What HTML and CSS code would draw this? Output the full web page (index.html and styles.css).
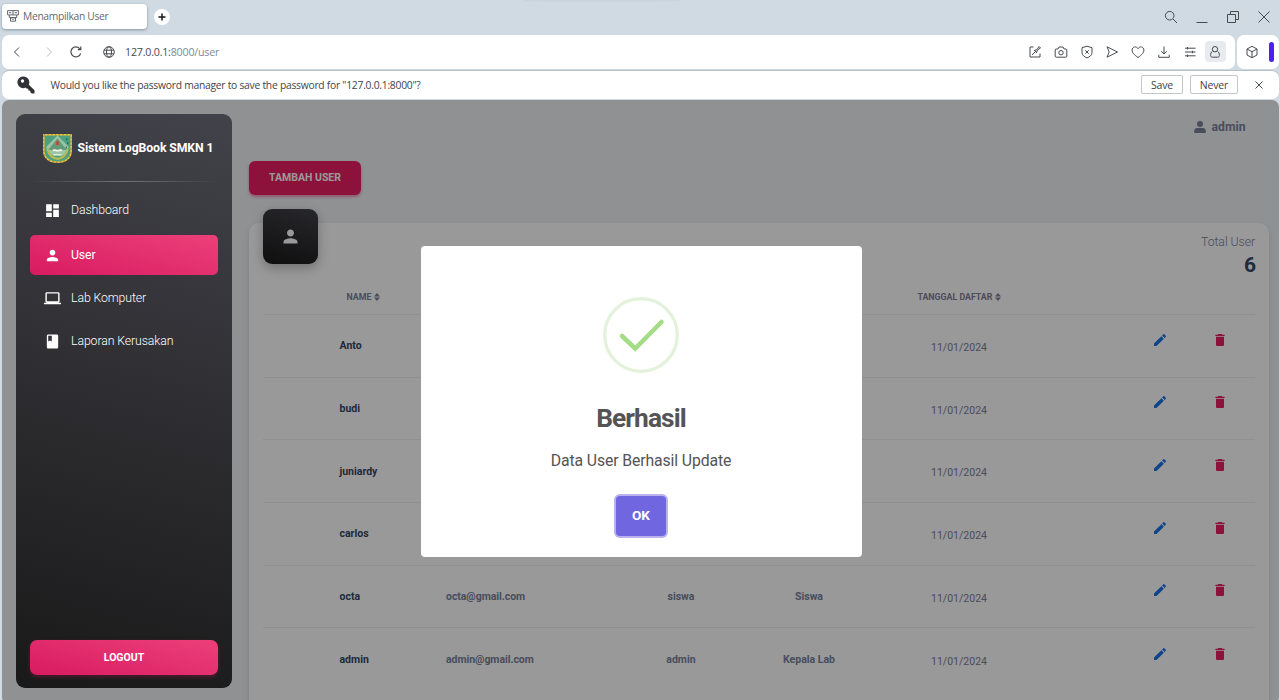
FILE: index.html
```
<!DOCTYPE html>
<html lang="id">
<head>
<meta charset="utf-8">
<title>Menampilkan User</title>
<link rel="stylesheet" href="styles.css">
</head>
<body>
<svg class="defs" width="0" height="0" aria-hidden="true">
  <symbol id="person" viewBox="0 0 24 24"><path d="M12 12c2.210 0 4-1.790 4-4s-1.790-4-4-4-4 1.790-4 4 1.790 4 4 4zm0 2c-2.670 0-8 1.340-8 4v2h16v-2c0-2.660-5.330-4-8-4z"/></symbol>
  <symbol id="edit" viewBox="0 0 24 24"><path d="M3 17.250V21h3.750L17.810 9.940l-3.750-3.750L3 17.250zM20.710 7.040c.390-.390.390-1.020 0-1.410l-2.340-2.340c-.390-.390-1.020-.390-1.410 0l-1.830 1.830 3.750 3.750 1.830-1.830z"/></symbol>
  <symbol id="trash" viewBox="0 0 24 24"><path d="M6 19c0 1.100.900 2 2 2h8c1.100 0 2-.900 2-2V7H6v12zM19 4h-3.500l-1-1h-5l-1 1H5v2h14V4z"/></symbol>
  <symbol id="sort" viewBox="0 0 6 8"><path d="M0 3.400L3 0l3 3.400zM0 4.600h6L3 8z"/></symbol>
</svg>

<header class="tabs">
  <div class="tab">
    <svg class="tab-icon" viewBox="0 0 12 12"><path d="M.6.600h10.800v4.300H.6zM6 .6v4.300M2 2.700h2.400M7.600 2.700H10M2.300 5v2.500h7.400V5M3.500 7.500v3.700h5V7.500M4.300 8l1.700 1.600L7.700 8"/></svg>
    <span>Menampilkan User</span>
  </div>
  <div class="new-tab"><svg viewBox="0 0 16 16"><path d="M8 4.500v7M4.500 8h7"/></svg></div>
  <div class="top-shade"></div>
  <div class="window-tools">
    <svg viewBox="0 0 14 14"><circle cx="5.700" cy="5.700" r="4.300"/><path d="M9 9l4 4"/></svg>
    <svg viewBox="0 0 14 14"><path d="M1.500 12.500h11"/></svg>
    <svg viewBox="0 0 14 14"><path d="M1.500 4.500h8v8h-8zM4.500 4.500v-3h8v8h-3"/></svg>
    <svg viewBox="0 0 14 14"><path d="M1.500 1.500l11 11M12.500 1.500l-11 11"/></svg>
  </div>
</header>

<div class="toolbar">
  <div class="address">
    <svg class="nav back" viewBox="0 0 14 14"><path d="M9 2.500L4.500 7 9 11.500"/></svg>
    <svg class="nav forward" viewBox="0 0 14 14"><path d="M5 2.500L9.500 7 5 11.500"/></svg>
    <svg class="nav reload" viewBox="0 0 14 14"><path d="M11.700 8.300A5 5 0 1 1 11 4M11.800 1.600v3H8.800"/></svg>
    <svg class="nav globe" viewBox="0 0 14 14"><circle cx="7" cy="7" r="5.300"/><ellipse cx="7" cy="7" rx="2.500" ry="5.300"/><path d="M2.200 5.200h9.600M2.200 8.800h9.600"/></svg>
    <span class="url">127.0.0.1:<span class="url-path">8000/user</span></span>
    <div class="actions">
      <svg viewBox="0 0 14 14"><path d="M5.500 2H2v10h10V8.500M4 10l3-3M6 5l3 3M6.500 5.500L9 4.500l2-3 1.500 1.500-3 2-1 2.500"/></svg>
      <svg viewBox="0 0 14 14"><path d="M2.200 4h1.800L5 2h4l1 2h1.800q1 0 1 1v6.200q0 1-1 1H2.200q-1 0-1-1V5q0-1 1-1z"/><circle cx="7" cy="7.700" r="2.200"/></svg>
      <svg viewBox="0 0 14 14"><path d="M7 1.200l5 1.500v5c0 2.600-2.500 4.200-5 5.200-2.500-1-5-2.600-5-5.200v-5zM5.300 5.300l3.400 3.400M8.700 5.300L5.300 8.700"/></svg>
      <svg viewBox="0 0 14 14"><path d="M2 1.800L12.500 7 2 12.200 4.200 7z"/></svg>
      <svg viewBox="0 0 14 14"><path d="M7 12.500C3 9.700 1.100 7.600 1.100 5.200 1.100 1.400 5.600.900 7 3.700c1.400-2.800 5.900-2.300 5.900 1.500C12.900 7.600 11 9.700 7 12.500z"/></svg>
      <svg viewBox="0 0 14 14"><path d="M7 1.500v7.300M4.200 6.200L7 9l2.800-2.800M1.800 9.800v2.500h10.400V9.800"/></svg>
      <svg viewBox="0 0 14 14"><path d="M2 3.200h10.500M2 7h10.500M2 10.800h10.500M4.500 2v2.400M9.500 5.800v2.400M4.500 9.600V12"/></svg>
      <div class="profile"><svg viewBox="0 0 14 14"><circle cx="7" cy="4.200" r="2.700"/><path d="M4.500 6.200C2.800 7.200 2.600 9 2.600 10.500c0 1 .6 1.700 1.700 1.700h5.400c1.100 0 1.700-.7 1.700-1.700 0-1.500-.2-3.300-1.900-4.300"/></svg></div>
    </div>
  </div>
  <div class="extension">
    <svg viewBox="0 0 14 14"><path d="M7 1.300l5 2.700v6L7 12.700 2 10V4zM2 4l5 2.700L12 4M7 6.700v6"/></svg>
    <div class="side-handle"></div>
  </div>
</div>

<div class="password-bar">
  <svg class="key" viewBox="0 0 18 18"><path fill-rule="evenodd" d="M6.300.500a5.800 5.800 0 1 0 2.300 11.100l.9.900 1.700.2.300 1.700 1.700.3.300 1.800 1.300 1h2.700v-3.200l-5.700-5.600A5.800 5.800 0 0 0 6.300.500zM5.500 3.300a1.700 1.700 0 1 1 0 3.400 1.700 1.700 0 0 1 0-3.400z"/></svg>
  <span class="question">Would you like the password manager to save the password for "127.0.0.1:8000"?</span>
  <button class="bar-button save">Save</button>
  <button class="bar-button never">Never</button>
  <svg class="dismiss" viewBox="0 0 10 10"><path d="M1.500 1.500l7 7M8.500 1.500l-7 7"/></svg>
</div>

<div class="page">
  <aside class="sidebar">
    <div class="brand">
      <svg class="crest" viewBox="0 0 28 28">
        <path d="M.8.800h26.400v15.700c0 6.500-5.200 10.700-13.200 10.700S.8 23 .8 16.500z" fill="#4d9f7d"/>
        <path d="M14 1.500l11 11-5 8H8l-5-8z" fill="#9cc5a6"/>
        <path d="M14 4l9 11.500H5z" fill="#649a78"/>
        <path d="M4 14q2 9 10 10 8-1 10-10" fill="none" stroke="#b6bb52" stroke-width="2"/>
        <path d="M9.500 15q2.500-.8 4.500.5 2-1.300 4.500-.5v1.600q-2.500-.8-4.500.5-2-1.300-4.500-.5zM10 19.500h8v1.300h-8z" fill="#f4f5ec"/>
        <path d="M12.800 8L14 6l1.200 2v2.500h-2.400z" fill="#cf3f35"/>
        <path d="M23 4v2M24 8v2M22.500 12v2" stroke="#254d49" stroke-width="1"/>
        <path d="M.8.800h26.400v15.700c0 6.500-5.200 10.700-13.200 10.700S.8 23 .8 16.500z" fill="none" stroke="#e0ce43" stroke-width="1.500"/>
        <path d="M.8.800h26.400v15.700c0 6.500-5.200 10.700-13.200 10.700S.8 23 .8 16.500z" fill="none" stroke="#bd5c3e" stroke-width="1" stroke-dasharray="1.200 2.400"/>
      </svg>
      <span>Sistem LogBook SMKN 1</span>
    </div>
    <div class="divider"></div>
    <nav class="menu">
      <a class="item"><svg viewBox="0 0 24 24"><path d="M3 13h8V3H3v10zm0 8h8v-6H3v6zm10 0h8V11h-8v10zm0-18v6h8V3h-8z"/></svg><span>Dashboard</span></a>
      <a class="item active"><svg><use href="#person"/></svg><span>User</span></a>
      <a class="item"><svg viewBox="0 0 24 24"><path d="M20 18c1.100 0 1.990-.900 1.990-2L22 5c0-1.100-.900-2-2-2H4c-1.100 0-2 .900-2 2v11c0 1.100.900 2 2 2H0v2h24v-2h-4zM4 5h16v11H4V5z"/></svg><span>Lab Komputer</span></a>
      <a class="item"><svg viewBox="0 0 24 24"><path fill-rule="evenodd" d="M18 2H6c-1.100 0-2 .900-2 2v16c0 1.100.900 2 2 2h12c1.100 0 2-.900 2-2V4c0-1.100-.900-2-2-2zM6 4h5v8l-2.500-1.500L6 12V4z"/></svg><span>Laporan Kerusakan</span></a>
    </nav>
    <button class="logout">LOGOUT</button>
  </aside>

  <main class="content">
    <div class="account"><svg viewBox="0 0 12 12"><circle cx="6" cy="3" r="3"/><path d="M.2 12V10A3.100 3.100 0 0 1 3.200 7h5.600a3.100 3.100 0 0 1 3 3v2z"/></svg><span>admin</span></div>
    <button class="add">TAMBAH USER</button>
    <section class="card">
      <div class="card-icon"><svg><use href="#person"/></svg></div>
      <div class="card-head">
        <div class="total-label">Total User</div>
        <div class="total">6</div>
      </div>
      <div class="table">
        <div class="row head"><span class="name">NAME <svg><use href="#sort"/></svg></span><span class="date">TANGGAL DAFTAR <svg><use href="#sort"/></svg></span></div>
        <div class="row"><span class="name">Anto</span><span class="date">11/01/2024</span><svg class="edit"><use href="#edit"/></svg><svg class="trash"><use href="#trash"/></svg></div>
        <div class="row"><span class="name">budi</span><span class="date">11/01/2024</span><svg class="edit"><use href="#edit"/></svg><svg class="trash"><use href="#trash"/></svg></div>
        <div class="row"><span class="name">juniardy</span><span class="date">11/01/2024</span><svg class="edit"><use href="#edit"/></svg><svg class="trash"><use href="#trash"/></svg></div>
        <div class="row"><span class="name">carlos</span><span class="date">11/01/2024</span><svg class="edit"><use href="#edit"/></svg><svg class="trash"><use href="#trash"/></svg></div>
        <div class="row"><span class="name">octa</span><span class="email">octa@gmail.com</span><span class="role">siswa</span><span class="position">Siswa</span><span class="date">11/01/2024</span><svg class="edit"><use href="#edit"/></svg><svg class="trash"><use href="#trash"/></svg></div>
        <div class="row"><span class="name">admin</span><span class="email">admin@gmail.com</span><span class="role">admin</span><span class="position">Kepala Lab</span><span class="date">11/01/2024</span><svg class="edit"><use href="#edit"/></svg><svg class="trash"><use href="#trash"/></svg></div>
      </div>
    </section>
  </main>

  <div class="overlay">
    <div class="dialog">
      <svg class="success" viewBox="0 0 76 76"><circle cx="38" cy="38" r="36.300"/><path d="M19 39L32.200 51.500 58.500 25"/></svg>
      <h2>Berhasil</h2>
      <p>Data User Berhasil Update</p>
      <button class="ok">OK</button>
    </div>
  </div>
</div>
</body>
</html>
```

FILE: styles.css
```
* { box-sizing: border-box; }
body {
  margin: 0;
  width: 1280px;
  height: 700px;
  overflow: hidden;
  display: flex;
  flex-direction: column;
  background: #d0dae2;
  font-family: Roboto, "Liberation Sans", sans-serif;
}
button { border: 0; padding: 0; font-family: inherit; }
.defs { position: absolute; }

/* Browser chrome */
.tabs, .toolbar, .password-bar { font-family: "Open Sans", "Noto Sans", sans-serif; }
.tabs svg, .toolbar svg, .dismiss { fill: none; stroke: #484b50; stroke-width: 1; }
.tabs { position: relative; height: 35px; flex: none; display: flex; align-items: flex-start; padding: 4px 8px 0 2px; }
.tab {
  width: 145px; height: 24.500px; border-radius: 4px; background: #fff;
  box-shadow: 0 1px 3px #8793a0;
  display: flex; align-items: center; gap: 4px; padding-left: 5px;
  font-size: 10.300px; color: #66696d;
}
.tab span { letter-spacing: -0.330px; }
.tabs .tab-icon { width: 12px; height: 12px; stroke: #55585c; stroke-width: .9; }
.new-tab { width: 16px; height: 16px; margin: 4.500px 0 0 7px; border-radius: 50%; background: #fff; }
.tabs .new-tab svg { display: block; stroke: #17191c; stroke-width: 1.500; }
.top-shade { position: absolute; left: 523px; top: 0; width: 158px; height: 2px; border-radius: 0 0 50% 50%; background: #cbd4dc; }
.window-tools { margin: 5.500px 1px 0 auto; display: flex; gap: 17px; }
.window-tools svg { width: 14px; height: 14px; }
.toolbar { height: 34px; flex: none; display: flex; gap: 2px; padding: 0 1px 0 2px; }
.address { flex: 1; display: flex; align-items: center; background: #fff; border-radius: 7px; padding: 0 9.500px 1px 8px; }
.address svg { width: 14px; height: 14px; }
.address .forward { margin-left: 18px; stroke: #b8bbc0; }
.address .reload { margin-left: 13px; stroke-width: 1.200; }
.address .globe { margin-left: 18.500px; }
.url { margin-left: 9.500px; font-size: 10.700px; color: #484b50; letter-spacing: -0.220px; }
.url-path { color: #818a95; }
.actions { margin-left: auto; display: flex; align-items: center; gap: 11.800px; }
.profile { width: 21px; height: 21px; margin-left: -4px; border-radius: 4px; background: #e7ebef; display: grid; place-items: center; }
.extension { width: 42px; background: #fff; border-radius: 7px; display: flex; align-items: center; gap: 10px; padding-left: 8px; }
.extension svg { width: 14px; height: 14px; }
.side-handle { width: 5px; height: 20px; border-radius: 3px; background: #4d20f5; }
.password-bar {
  height: 28px; flex: none; margin: 2px 1px 1px 2px; padding: 0 15px;
  border-radius: 7px; background: #fff; box-shadow: 0 -1px #b5c0c8;
  display: flex; align-items: center; color: #414448; font-size: 10.300px;
}
.key { width: 18px; height: 18px; fill: #303236; }
.question { margin-left: 15.500px; letter-spacing: -0.250px; }
.bar-button { height: 19px; border: 1px solid #c3c6c9; border-radius: 2px; background: #fff; color: #414448; font-size: 10.500px; letter-spacing: -0.150px; margin-bottom: 1px; }
.save { width: 42px; margin-left: auto; }
.never { width: 48px; margin-left: 7px; margin-right: 16px; }
.dismiss { width: 10px; height: 10px; }

/* Application */
.page {
  position: relative; flex: none; width: 1277px; height: 604px; margin-left: 2px;
  border-radius: 7px; background: #f0f2f5; overflow: hidden; display: flex; padding: 14px;
}
.sidebar {
  position: relative; z-index: 3; flex: none; width: 216px; height: 574px; padding: 18px 14px 13px;
  border-radius: 9px; background: linear-gradient(195deg, #42424a, #191919);
  display: flex; flex-direction: column; color: #fff;
}
.brand { height: 31px; padding-left: 13px; display: flex; align-items: center; gap: 5.500px; font-size: 12.250px; font-weight: 700; white-space: nowrap; letter-spacing: -0.100px; }
.brand span { margin-top: 1px; }
.crest { width: 29px; height: 29px; flex: none; margin-top: 1px; }
.divider { height: 1px; margin-top: 18px; background: linear-gradient(90deg, transparent, #72727a, transparent); }
.menu { margin-top: 8px; display: flex; flex-direction: column; gap: 3px; }
.item { height: 40px; border-radius: 5px; display: flex; align-items: center; gap: 10px; padding-left: 14px; font-size: 12.300px; font-weight: 300; letter-spacing: -0.100px; }
.item svg { width: 17px; height: 17px; fill: #fff; }
.active { margin-top: 2px; background: linear-gradient(195deg, #ec407a, #d81b60); font-weight: 400; }
.logout {
  margin-top: auto; height: 35px; border-radius: 7px; color: #fff; font-size: 10.500px; font-weight: 700;
  background: linear-gradient(195deg, #ec407a, #d81b60); box-shadow: 0 2px 4px #e91e6340;
}
.content { flex: 1; margin-left: 17px; display: flex; flex-direction: column; margin-right: -4px; }
.account { align-self: flex-end; height: 26px; flex: none; margin-right: 23.500px; display: flex; align-items: center; gap: 6px; color: #7b809a; font-size: 12.200px; font-weight: 700; }
.account svg { width: 12px; height: 12px; fill: currentColor; }
.add {
  width: 112px; height: 34px; margin-top: 21px; padding-bottom: 1px; flex: none; border-radius: 6px;
  background: #e91e63; color: #fff; font-size: 10.500px; font-weight: 700;
  box-shadow: 0 2px 3px #e91e6370;
}
.card { position: relative; height: 520px; flex: none; margin-top: 28px; padding: 0 14px; border-radius: 10px; background: #fff; box-shadow: 0 3px 6px #00000020; }
.card-icon {
  position: absolute; left: 14px; top: -14px; width: 55px; height: 55px; border-radius: 9px;
  background: linear-gradient(195deg, #42424a, #191919); box-shadow: 0 4px 12px #00000045;
  display: grid; place-items: center;
}
.card-icon svg { width: 21px; height: 21px; fill: #fff; }
.card-head { height: 56px; padding-top: 11px; text-align: right; color: #7b809a; }
.total-label { font-size: 12.300px; line-height: 16px; font-weight: 300; letter-spacing: -0.080px; }
.total { font-size: 21px; line-height: 31px; font-weight: 700; color: #344767; margin-right: -1px; }
.row {
  display: grid; grid-template-columns: 76.500px 106.500px 171px 128px 128px 172px 85px 60px 60px;
  grid-template-rows: 100%; align-items: center; height: 62.700px; border-bottom: 1px solid #eef0f3;
  color: #7b809a; font-size: 10.500px; font-weight: 700;
}
.row:last-child { border-bottom: 0; }
.row > * { grid-row: 1; }
.name { grid-column: 2; color: #344767; }
.email { grid-column: 3; letter-spacing: -0.050px; }
.role { grid-column: 4; text-align: center; }
.position { grid-column: 5; text-align: center; }
.date { grid-column: 6; text-align: center; font-weight: 400; padding-top: 3px; }
.edit, .trash { width: 16px; height: 16px; justify-self: center; margin-bottom: 12.500px; }
.edit { grid-column: 8; fill: #1a73e8; }
.trash { grid-column: 9; fill: #e91e63; }
.head { height: 36px; font-size: 8.800px; }
.head .name { padding-left: 7px; color: inherit; }
.head .date { font-weight: 700; padding: 0; }
.head svg { width: 6px; height: 8px; fill: currentColor; vertical-align: -1px; }

/* Confirmation dialog */
.overlay { position: absolute; inset: 0; z-index: 2; background: rgba(0, 0, 0, .4); }
.dialog {
  position: absolute; left: 418.500px; top: 145.500px; width: 441px; height: 311.500px; padding-top: 51px;
  border-radius: 4px; background: #fff; color: #545454;
  display: flex; flex-direction: column; align-items: center;
}
.success { width: 76px; height: 76px; flex: none; fill: none; stroke-linecap: round; }
.success circle { stroke: #e4f2dc; stroke-width: 3.300; }
.success path { stroke: #a5dc86; stroke-width: 4.500; }
.dialog h2 { margin: 27px 0 0; font-size: 26.300px; line-height: 36px; font-weight: 700; letter-spacing: -0.900px; }
.dialog p { margin: 13px 0 0; font-size: 15.800px; line-height: 24px; letter-spacing: -0.120px; }
.ok { width: 50px; height: 40px; margin-top: 23px; padding-bottom: 1px; border-radius: 4px; background: #7066e0; color: #fff; font-size: 13.600px; font-weight: 700; box-shadow: 0 0 0 2px #b9b2ef; }
```
